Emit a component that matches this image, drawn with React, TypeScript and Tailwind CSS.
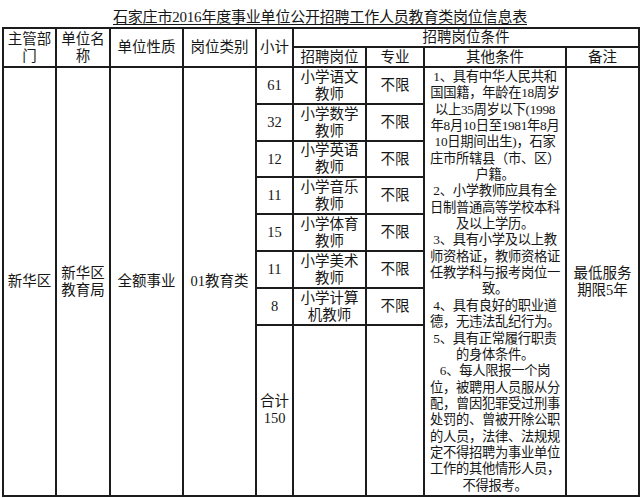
import React from 'react';

const jobs = [
  { count: '61', name: ['小学语文', '教师'] },
  { count: '32', name: ['小学数学', '教师'] },
  { count: '12', name: ['小学英语', '教师'] },
  { count: '11', name: ['小学音乐', '教师'] },
  { count: '15', name: ['小学体育', '教师'] },
  { count: '11', name: ['小学美术', '教师'] },
  { count: '8', name: ['小学计算', '机教师'] },
];

const rowHeights = ['h-[37px]', 'h-[37px]', 'h-[36px]', 'h-[37px]', 'h-[37px]', 'h-[37px]', 'h-[36px]'];

// 其他条件, one entry per printed line
const conditions = [
  '1、具有中华人民共和',
  '国国籍，年龄在18周岁',
  '以上35周岁以下(1998',
  '年8月10日至1981年8月',
  '10日期间出生)，石家',
  '庄市所辖县（市、区）',
  '户籍。',
  '2、小学教师应具有全',
  '日制普通高等学校本科',
  '及以上学历。',
  '3、具有小学及以上教',
  '师资格证，教师资格证',
  '任教学科与报考岗位一',
  '致。',
  '4、具有良好的职业道',
  '德，无违法乱纪行为。',
  '5、具有正常履行职责',
  '的身体条件。',
  '6、每人限报一个岗',
  '位，被聘用人员服从分',
  '配，曾因犯罪受过刑事',
  '处罚的、曾被开除公职',
  '的人员，法律、法规规',
  '定不得招聘为事业单位',
  '工作的其他情形人员，',
  '不得报考。',
];

const cell = 'border-2 border-[#1c1c1c] p-0 text-center align-middle';

export default function App() {
  return (
    <div className="w-[640px] h-[498px] overflow-hidden bg-white text-[#161616] font-['Liberation_Serif','Noto_Sans_CJK_SC',serif]">
      <div className="pt-[8px] h-[27px] text-center text-[15px] leading-[18px] tracking-[-0.2px]">
        <span className="underline underline-offset-[2px] decoration-1">
          石家庄市2016年度事业单位公开招聘工作人员教育类岗位信息表
        </span>
      </div>
      <table className="ml-[2px] w-[636px] table-fixed border-collapse text-[14.5px] leading-[17px]">
        <colgroup>
          <col className="w-[53px]" />
          <col className="w-[54px]" />
          <col className="w-[73px]" />
          <col className="w-[73px]" />
          <col className="w-[37px]" />
          <col className="w-[73px]" />
          <col className="w-[58px]" />
          <col className="w-[142px]" />
          <col className="w-[73px]" />
        </colgroup>
        <tbody>
          <tr className="h-[19px]">
            <td rowSpan={2} className={cell}>
              主管部
              <br />门
            </td>
            <td rowSpan={2} className={cell}>
              单位名
              <br />称
            </td>
            <td rowSpan={2} className={cell}>单位性质</td>
            <td rowSpan={2} className={cell}>岗位类别</td>
            <td rowSpan={2} className={cell}>小计</td>
            <td colSpan={4} className={cell}>招聘岗位条件</td>
          </tr>
          <tr className="h-[20px]">
            <td className={cell}>招聘岗位</td>
            <td className={cell}>专业</td>
            <td className={cell}>其他条件</td>
            <td className={cell}>备注</td>
          </tr>
          {jobs.map((job, i) => (
            <tr key={i} className={rowHeights[i]}>
              {i === 0 && (
                <>
                  <td rowSpan={8} className={cell}>新华区</td>
                  <td rowSpan={8} className={cell}>
                    新华区
                    <br />
                    教育局
                  </td>
                  <td rowSpan={8} className={cell}>全额事业</td>
                  <td rowSpan={8} className={cell}>01教育类</td>
                </>
              )}
              <td className={cell}>{job.count}</td>
              <td className={cell}>
                {job.name[0]}
                <br />
                {job.name[1]}
              </td>
              <td className={cell}>不限</td>
              {i === 0 && (
                <>
                  <td rowSpan={8} className={`${cell} align-top`}>
                    <div className="h-[427px] overflow-hidden pt-[1px] text-[13.3px] leading-[16.35px] tracking-[-0.3px]">
                      {conditions.map((line, j) => (
                        <div key={j} className="whitespace-nowrap">
                          {line}
                        </div>
                      ))}
                    </div>
                  </td>
                  <td rowSpan={8} className={cell}>
                    最低服务
                    <br />
                    期限5年
                  </td>
                </>
              )}
            </tr>
          ))}
          <tr className="h-[171px]">
            <td className={cell}>
              合计
              <br />
              150
            </td>
            <td className={cell}></td>
            <td className={cell}></td>
          </tr>
        </tbody>
      </table>
    </div>
  );
}
